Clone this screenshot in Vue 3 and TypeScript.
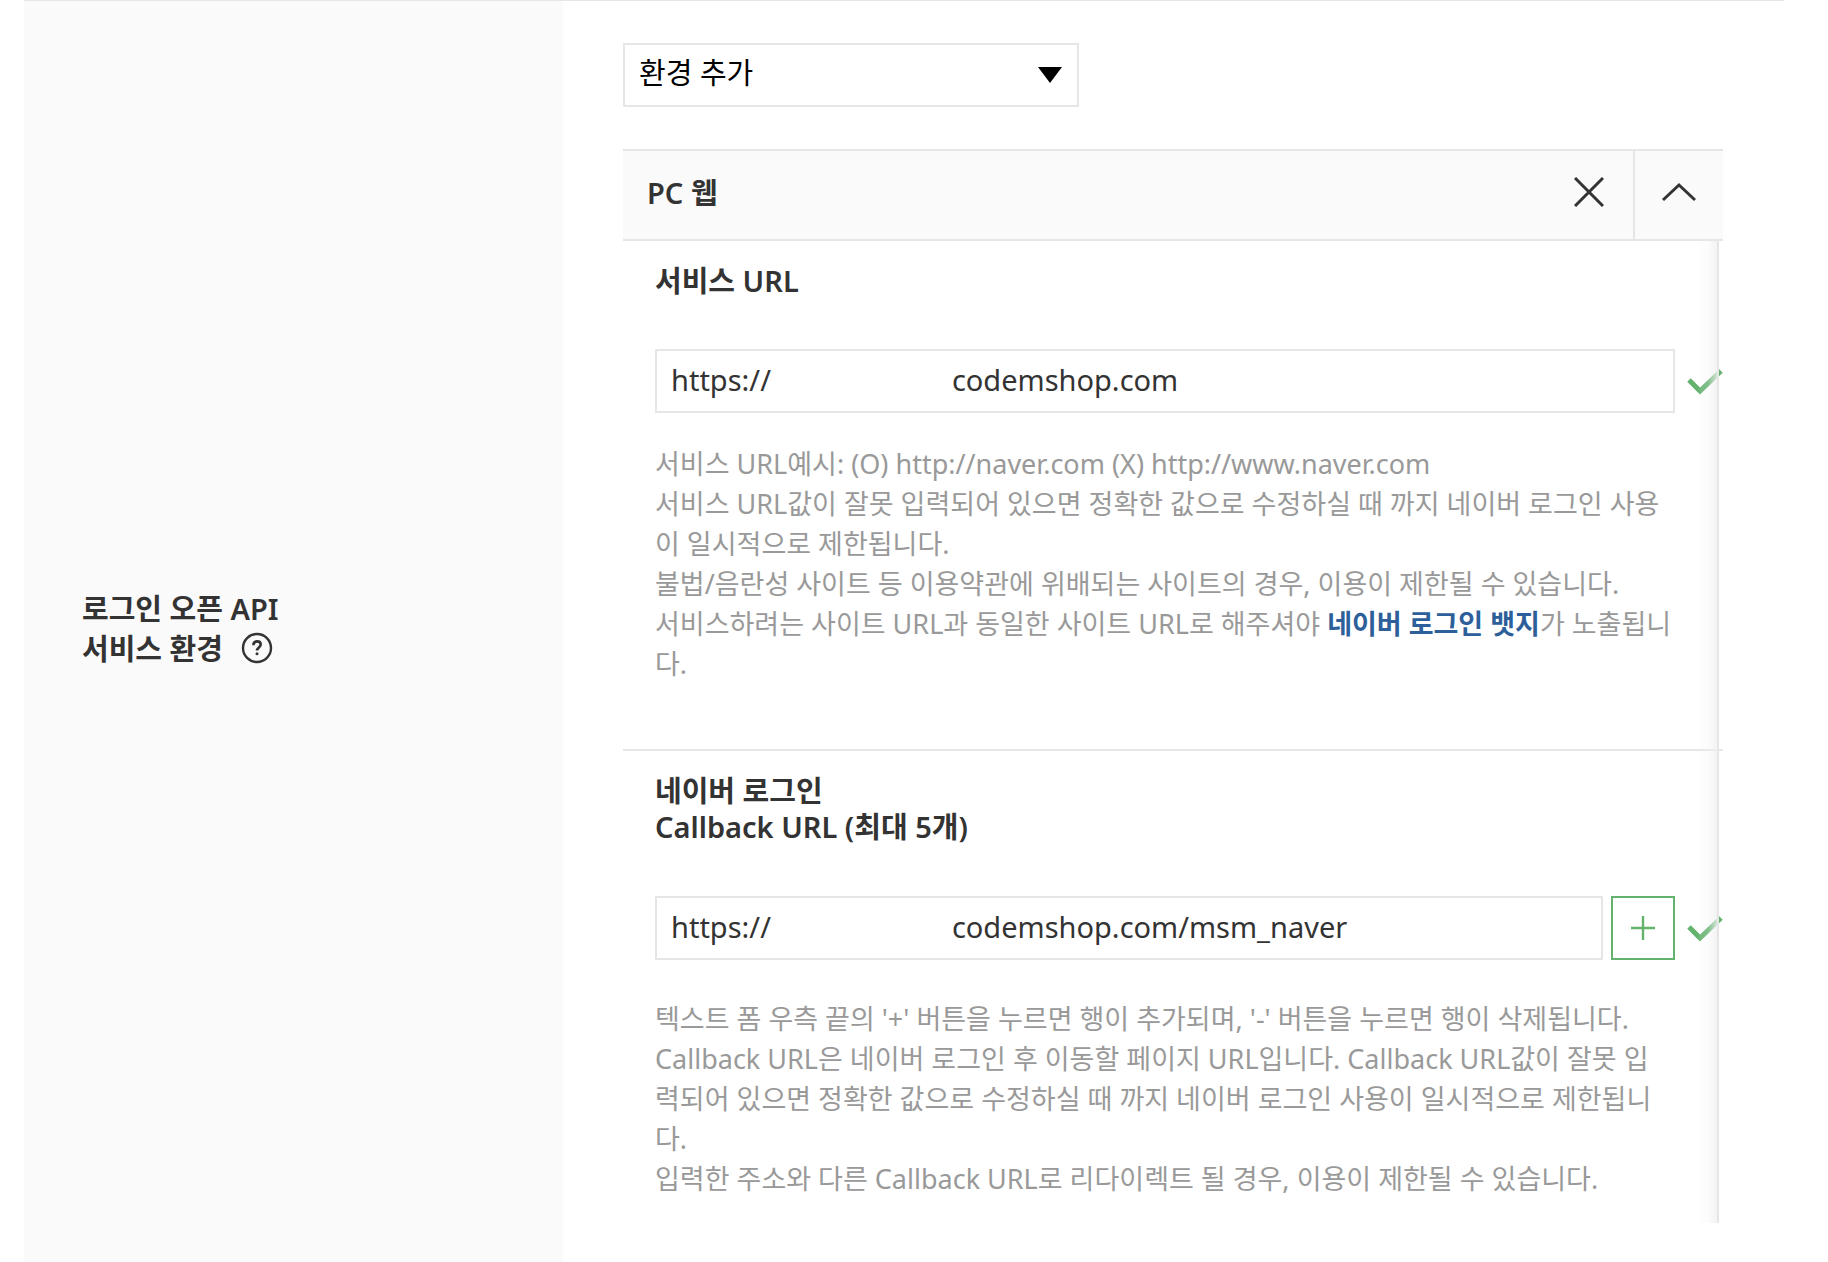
<script setup lang="ts">
import { ref } from 'vue'

const gap = '\u00a0'.repeat(24)
const environment = ref('')
const serviceUrl = ref(`https://${gap}codemshop.com`)
const callbackUrl = ref(`https://${gap}codemshop.com/msm_naver`)
const expanded = ref(true)
</script>

<template>
  <main class="page">
    <div class="form-row">
      <div class="row-label">
        <p class="label-text">
          로그인 오픈 API<br />서비스 환경
          <button class="icon-button help-button" type="button" aria-label="도움말">
            <svg width="32" height="32" viewBox="0 0 32 32" fill="none" stroke="#333" aria-hidden="true">
              <circle cx="16" cy="16" r="14" stroke-width="2.4" />
              <path d="M12.4 13.2c0-2.4 1.5-3.8 3.7-3.8 2.1 0 3.6 1.3 3.6 3.1 0 2.8-3.7 3-3.7 6" stroke-width="2.6" />
              <circle cx="16" cy="21.8" r="1.5" fill="#333" stroke="none" />
            </svg>
          </button>
        </p>
      </div>

      <div class="row-content">
        <div class="select-wrap">
          <select v-model="environment" class="select" aria-label="환경 추가">
            <option value="">환경 추가</option>
          </select>
          <svg class="select-arrow" width="24" height="16" viewBox="0 0 24 16" aria-hidden="true">
            <path d="M0 0h24L12 16z" fill="#000" />
          </svg>
        </div>

        <section class="panel">
          <header class="panel-head">
            <h2 class="panel-title">PC 웹</h2>
            <button class="icon-button close-button" type="button" aria-label="삭제">
              <svg width="30" height="30" viewBox="0 0 30 30" fill="none" stroke="#333" stroke-width="3" aria-hidden="true">
                <path d="M1 1l28 28M29 1L1 29" />
              </svg>
            </button>
            <button class="icon-button fold-button" type="button" aria-label="접기" @click="expanded = !expanded">
              <svg width="34" height="20" viewBox="0 0 34 20" fill="none" stroke="#333" stroke-width="3" aria-hidden="true">
                <path d="M1 18L17 3l16 15" />
              </svg>
            </button>
          </header>

          <div v-if="expanded" class="panel-body">
            <div class="field">
              <label class="field-title" for="service-url">서비스 URL</label>
              <div class="field-line">
                <input id="service-url" v-model="serviceUrl" class="text-input" type="text" spellcheck="false" />
                <svg class="check" width="36" height="28" viewBox="0 0 36 28" fill="none" stroke="#63b26e" stroke-width="5" aria-hidden="true">
                  <path d="M2 13l11 11L34 4" />
                </svg>
              </div>
              <div class="help">
                <p>서비스 URL예시: (O) http://naver.com (X) http://www.naver.com</p>
                <p>서비스 URL값이 잘못 입력되어 있으면 정확한 값으로 수정하실 때 까지 네이버 로그인 사용이 일시적으로 제한됩니다.</p>
                <p>불법/음란성 사이트 등 이용약관에 위배되는 사이트의 경우, 이용이 제한될 수 있습니다.</p>
                <p>서비스하려는 사이트 URL과 동일한 사이트 URL로 해주셔야 <a class="link" href="#">네이버 로그인 뱃지</a>가 노출됩니다.</p>
              </div>
            </div>

            <div class="field">
              <label class="field-title" for="callback-url">네이버 로그인<br />Callback URL (최대 5개)</label>
              <div class="field-line">
                <input id="callback-url" v-model="callbackUrl" class="text-input" type="text" spellcheck="false" />
                <button class="add-button" type="button" aria-label="추가">
                  <svg width="24" height="24" viewBox="0 0 24 24" fill="none" stroke="#63b26e" stroke-width="2.4" aria-hidden="true">
                    <path d="M12 0v24M0 12h24" />
                  </svg>
                </button>
                <svg class="check" width="36" height="28" viewBox="0 0 36 28" fill="none" stroke="#63b26e" stroke-width="5" aria-hidden="true">
                  <path d="M2 13l11 11L34 4" />
                </svg>
              </div>
              <div class="help">
                <p>텍스트 폼 우측 끝의 '+' 버튼을 누르면 행이 추가되며, '-' 버튼을 누르면 행이 삭제됩니다.</p>
                <p>Callback URL은 네이버 로그인 후 이동할 페이지 URL입니다. Callback URL값이 잘못 입력되어 있으면 정확한 값으로 수정하실 때 까지 네이버 로그인 사용이 일시적으로 제한됩니다.</p>
                <p>입력한 주소와 다른 Callback URL로 리다이렉트 될 경우, 이용이 제한될 수 있습니다.</p>
              </div>
            </div>
          </div>
        </section>
      </div>
    </div>
  </main>
</template>

<style>
body {
  margin: 0;
  background: #fff;
}
</style>

<style scoped>
* {
  box-sizing: border-box;
}

.page {
  display: flex;
  min-height: 100vh;
  padding: 0 44px 0 24px;
  color: #333;
  font-family: 'Noto Sans', 'Noto Sans CJK KR', sans-serif;
  font-size: 29px;
  line-height: 40px;
}

.form-row {
  display: flex;
  flex: 1;
  border-top: 1px solid #e6e6e6;
}

.row-label {
  display: flex;
  flex: 0 0 539px;
  align-items: center;
  padding: 0 58px 6px;
  background: #fafafa;
}

.label-text {
  margin: 0;
  font-weight: 600;
}

.icon-button {
  display: flex;
  align-items: center;
  justify-content: center;
  padding: 0;
  border: 0;
  background: none;
  cursor: pointer;
}

.help-button {
  display: inline-flex;
  margin-left: 11px;
  vertical-align: -4px;
}

.row-content {
  flex: 1;
  min-width: 0;
  padding: 42px 61px 0 60px;
}

.select-wrap {
  position: relative;
  max-width: 456px;
}

.select {
  display: block;
  width: 100%;
  height: 64px;
  padding: 0 14px 4px;
  border: 2px solid #e6e6e6;
  border-radius: 0;
  background: #fff;
  color: #000;
  font: inherit;
  appearance: none;
}

.select-arrow {
  position: absolute;
  top: 24px;
  right: 17px;
  pointer-events: none;
}

.panel {
  margin-top: 42px;
}

.panel-head {
  display: flex;
  height: 92px;
  border: solid #e6e6e6;
  border-width: 2px 0;
  background: #fafafa;
}

.panel-title {
  flex: 1;
  margin: 0;
  padding-left: 24px;
  font-size: 29px;
  font-weight: 600;
  line-height: 84px;
}

.close-button {
  width: 88px;
  padding-bottom: 6px;
}

.fold-button {
  width: 90px;
  padding-bottom: 6px;
  border-left: 2px solid #e6e6e6;
}

.panel-body {
  position: relative;
}

/* scroll edge drawn over the right side of the fields */
.panel-body::after {
  content: '';
  position: absolute;
  top: 0;
  right: 4px;
  bottom: 0;
  width: 18px;
  border-right: 2px solid #e6e6e6;
  background: linear-gradient(to right, rgba(240, 240, 240, 0.1), rgba(240, 240, 240, 0.2) 50%, rgba(240, 240, 240, 0.8));
  pointer-events: none;
}

.field {
  padding: 22px 0 24px 32px;
}

.field + .field {
  border-top: 2px solid #e6e6e6;
}

.field:first-child {
  padding-bottom: 65px;
}

.field-title {
  display: block;
  font-weight: 600;
  line-height: 36px;
}

.field-line {
  display: flex;
  gap: 8px;
  align-items: center;
  margin-top: 50px;
}

.field + .field .field-line {
  margin-top: 51px;
}

.text-input {
  flex: 1;
  min-width: 0;
  height: 64px;
  padding: 0 14px 4px;
  border: 2px solid #e6e6e6;
  border-radius: 0;
  background: #fff;
  color: #333;
  font: inherit;
}

.add-button {
  display: flex;
  flex: none;
  align-items: center;
  justify-content: center;
  width: 64px;
  height: 64px;
  padding: 0;
  border: 2px solid #63b26e;
  background: #fff;
  cursor: pointer;
}

.check {
  flex: none;
  margin-left: 4px;
}

.help {
  margin: 31px 48px 0 0;
  color: #999;
  font-size: 27px;
  word-break: break-all;
}

.field + .field .help {
  margin-top: 39px;
  margin-right: 60px;
}

.help p {
  margin: 0;
}

.link {
  color: #2d5f9a;
  font-weight: 700;
  text-decoration: none;
}
</style>
